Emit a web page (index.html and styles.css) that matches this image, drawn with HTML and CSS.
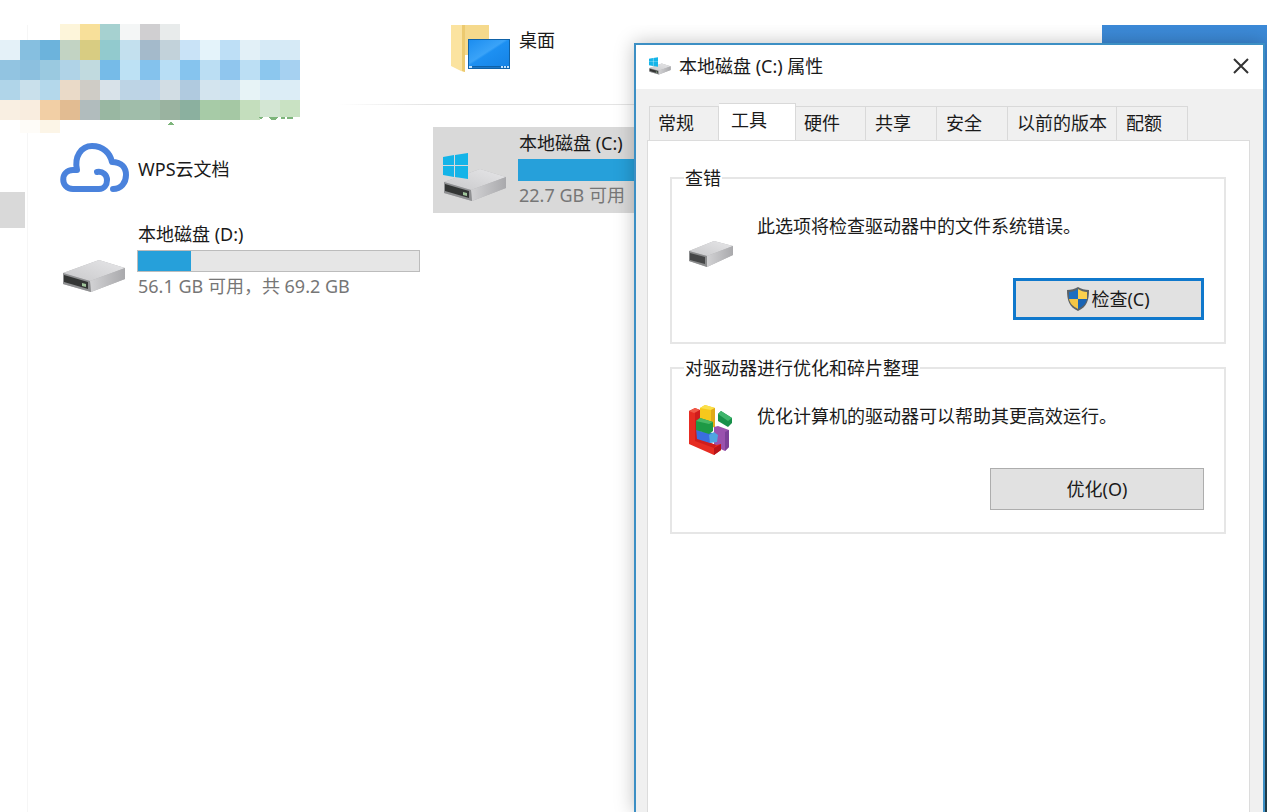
FILE: index.html
```
<!DOCTYPE html>
<html lang="zh-CN">
<head>
  <meta charset="UTF-8" />
  <meta name="viewport" content="width=device-width, initial-scale=1.0"/>
  <title>本地磁盘 (C:) 属性</title>
  <link rel="stylesheet" href="styles.css">
</head>
<body>
  <!-- shared icons -->
  <svg width="0" height="0" class="defs" aria-hidden="true">
    <defs>
      <linearGradient id="drive-top" x1="0" y1="1" x2="1" y2="0">
        <stop offset="0" stop-color="#c9c9cb"/>
        <stop offset="1" stop-color="#e6e6e8"/>
      </linearGradient>
      <linearGradient id="drive-side" x1="0" y1="0" x2="1" y2="0">
        <stop offset="0" stop-color="#d2d2d4"/>
        <stop offset="1" stop-color="#a9a9ac"/>
      </linearGradient>
      <linearGradient id="screen" x1="0" y1="0" x2="1" y2="1">
        <stop offset="0" stop-color="#1b8df0"/>
        <stop offset="0.45" stop-color="#3aa3f8"/>
        <stop offset="0.5" stop-color="#1d90f2"/>
        <stop offset="1" stop-color="#1583e6"/>
      </linearGradient>
      <symbol id="drive" viewBox="0 0 64 34">
        <path d="M1 14 37 1 63 9 63 20 29 33 1 25z" fill="#b5b5b7"/>
        <path d="M1 14 37 1 63 9 28 22z" fill="url(#drive-top)"/>
        <path d="M28 22 63 9 63 20 29 33z" fill="url(#drive-side)"/>
        <path d="M1 14 28 22 29 33 1 25z" fill="#8f9092"/>
        <path d="M2 16 26 23 26 30 2 23z" fill="#333534"/>
        <path d="M20 24l4 1v3l-4-1z" fill="#9fc49a"/>
      </symbol>
      <symbol id="windows" viewBox="0 0 25 26">
        <path d="M0 4 11 2V12H0zM12 2 25 0V12H12zM0 13H11V24L0 22zM12 13H25V26L12 24z" fill="#14b4e8"/>
      </symbol>
    </defs>
  </svg>

  <div class="desktop">
    <div class="explorer">
      <div class="sidebar"><div class="sidebar-item"></div></div>
      <div class="content">
        <div class="folders">
          <div class="tile tile-folder">
            <div class="tile-icon">
              <svg width="60" height="48" viewBox="0 0 60 48">
                <path d="M0 0H38V30H14z" fill="#f5d98c"/>
                <path d="M0 0H14V47L10 46 0 41z" fill="#fbe3a0"/>
                <path d="M14 0V47L11 46V0z" fill="#ecca70"/>
                <rect x="17" y="14" width="42" height="30" fill="#0f62a8"/>
                <rect x="18" y="15" width="40" height="26" fill="url(#screen)"/>
                <path d="M18 42H58V43H18z" fill="#1b77c8"/>
                <path d="M18 41h3v2h-3zM50 41h2v2h-2zM53 41h2v2h-2zM56 41h2v2h-2z" fill="#bfe2ff"/>
              </svg>
            </div>
            <div class="tile-body">
              <div class="tile-name">桌面</div>
            </div>
          </div>
        </div>

        <div class="drives">
          <div class="tile tile-center">
            <div class="tile-icon">
              <svg width="70" height="52" viewBox="0 0 70 52" fill="none" stroke="#4a82dc" stroke-width="6" stroke-linecap="round" stroke-linejoin="round">
                <path d="M37 29C43 28 47 32 47 37 47 42 44 46 39 46H13C0 46 0 27 13 27H17C14 14 21 3 32 3 43 3 50 10 52 19 62 19 66 25 66 32 66 40 61 46 53 46"/>
              </svg>
            </div>
            <div class="tile-body">
              <div class="tile-name">WPS云文档</div>
            </div>
          </div>

          <div class="tile tile-selected">
            <div class="tile-icon">
              <svg width="65" height="50" viewBox="0 0 65 50">
                <use href="#drive" x="0" y="15" width="64" height="34"/>
                <use href="#windows" x="0" y="0" width="25" height="26"/>
              </svg>
            </div>
            <div class="tile-body">
              <div class="tile-name">本地磁盘 (C:)</div>
              <div class="bar"><div class="bar-fill" style="width: 80%"></div></div>
              <div class="tile-info">22.7 GB 可用</div>
            </div>
          </div>

          <div class="tile">
            <div class="tile-icon">
              <svg width="65" height="50" viewBox="0 0 65 50">
                <use href="#drive" x="0" y="15" width="64" height="34"/>
              </svg>
            </div>
            <div class="tile-body">
              <div class="tile-name">本地磁盘 (D:)</div>
              <div class="bar"><div class="bar-fill" style="width: 19%"></div></div>
              <div class="tile-info">56.1 GB 可用，共 69.2 GB</div>
            </div>
          </div>
        </div>
      </div>
    </div>

    <div class="dialog" role="dialog" aria-labelledby="dialog-title">
      <div class="titlebar">
        <svg width="23" height="18" viewBox="0 0 23 18">
          <use href="#drive" x="1" y="6" width="22" height="12"/>
          <use href="#windows" x="1" y="0" width="9" height="10"/>
        </svg>
        <span id="dialog-title">本地磁盘 (C:) 属性</span>
        <button type="button" class="close" aria-label="关闭">
          <svg width="16" height="16" viewBox="0 0 16 16" stroke="#333" stroke-width="2"><path d="M1 1 15 15M15 1 1 15"/></svg>
        </button>
      </div>

      <div class="dialog-body">
        <div class="tabs" role="tablist">
          <button type="button" class="tab" role="tab">常规</button>
          <button type="button" class="tab active" role="tab" aria-selected="true">工具</button>
          <button type="button" class="tab" role="tab">硬件</button>
          <button type="button" class="tab" role="tab">共享</button>
          <button type="button" class="tab" role="tab">安全</button>
          <button type="button" class="tab" role="tab">以前的版本</button>
          <button type="button" class="tab" role="tab">配额</button>
        </div>

        <div class="panel" role="tabpanel">
          <fieldset>
            <legend>查错</legend>
            <div class="group">
              <div class="group-icon">
                <svg width="46" height="54" viewBox="0 0 46 54">
                  <path d="M1 37 26 27 45 32 45 41 19 53 1 47z" fill="#b4b4b6"/>
                  <path d="M1 37 26 27 45 32 19 42z" fill="url(#drive-top)"/>
                  <path d="M19 42 45 32 45 41 19 53z" fill="url(#drive-side)"/>
                  <path d="M1 37 19 42 19 53 1 47z" fill="#8a8b8c"/>
                  <path d="M2 39 17 43 17 50 2 46z" fill="#454647"/>
                </svg>
              </div>
              <p>此选项将检查驱动器中的文件系统错误。</p>
            </div>
            <div class="actions">
              <button type="button" class="btn btn-default">
                <svg width="22" height="24" viewBox="0 0 22 24">
                  <path d="M11 0C8 2 4 3 0 3 0 13 2 20 11 24 20 20 22 13 22 3 18 3 14 2 11 0z" fill="#5c6266"/>
                  <path d="M11 2C8 4 5 5 2 5L2 12H11z" fill="#1d6fc0"/>
                  <path d="M11 2C14 4 17 5 20 5L20 12H11z" fill="#fbd04e"/>
                  <path d="M2 12H11V22C5 19 3 16 2 12z" fill="#f4c544"/>
                  <path d="M20 12H11V22C17 19 19 16 20 12z" fill="#1a64b4"/>
                </svg>检查(C)
              </button>
            </div>
          </fieldset>

          <fieldset>
            <legend>对驱动器进行优化和碎片整理</legend>
            <div class="group">
              <div class="group-icon">
                <svg width="46" height="54" viewBox="0 0 46 54">
                  <path d="M12 4 17 1 27 4V22L12 18z" fill="#f6c81c"/>
                  <path d="M12 4 17 1 27 4 23 6z" fill="#fbe04a"/>
                  <path d="M23 6 27 4V24L23 22z" fill="#e0aa18"/>
                  <path d="M26 23 30 22 41 26V43L37 47 26 42z" fill="#9a52ae"/>
                  <path d="M37 28 41 26V43L37 47z" fill="#7c4098"/>
                  <path d="M1 7 7 4 12 6V35L28 41 33 40V46L26 51 1 40z" fill="#e62c22"/>
                  <path d="M1 7 7 4 12 6 6 9z" fill="#f05a48"/>
                  <path d="M7 9 12 6V35L28 41 26 44 7 37z" fill="#cf1d1c"/>
                  <path d="M26 44 33 40V46L26 51z" fill="#b8141a"/>
                  <path d="M8 24 12 27 25 29V37L22 39 9 35z" fill="#3a6ee0"/>
                  <path d="M21 31 26 28 30 31 29 38 22 39z" fill="#4fa5e2"/>
                  <path d="M8 17 12 14 25 18V27L21 30 8 26z" fill="#1d9a45"/>
                  <path d="M8 17 12 14 25 18 21 20z" fill="#48b866"/>
                  <path d="M30 10 33 7 44 14V19L40 23 30 17z" fill="#18904a"/>
                  <path d="M30 10 33 7 44 14 40 17z" fill="#3fb56c"/>
                </svg>
              </div>
              <p>优化计算机的驱动器可以帮助其更高效运行。</p>
            </div>
            <div class="actions">
              <button type="button" class="btn btn-wide">优化(O)</button>
            </div>
          </fieldset>
        </div>
      </div>
    </div>
  </div>

  <!-- pixelated cover over the logo -->
  <svg class="mosaic" width="300" height="112" viewBox="0 0 300 112" shape-rendering="crispEdges" aria-hidden="true">
    <g>
      <rect x="60" y="0" width="20" height="16" fill="#fdf5da"/>
      <rect x="80" y="0" width="20" height="16" fill="#f8e09a"/>
      <rect x="100" y="0" width="20" height="16" fill="#a6d1d0"/>
      <rect x="120" y="0" width="20" height="16" fill="#f4f6f6"/>
      <rect x="140" y="0" width="20" height="16" fill="#d0cfd1"/>
      <rect x="160" y="0" width="20" height="16" fill="#e8ebeb"/>
    </g>
    <g>
      <rect x="0" y="16" width="20" height="20" fill="#e4f1f8"/>
      <rect x="20" y="16" width="20" height="20" fill="#86bfe0"/>
      <rect x="40" y="16" width="20" height="20" fill="#6cb3dc"/>
      <rect x="60" y="16" width="20" height="20" fill="#c2d3c3"/>
      <rect x="80" y="16" width="20" height="20" fill="#d8cc82"/>
      <rect x="100" y="16" width="20" height="20" fill="#92cace"/>
      <rect x="120" y="16" width="20" height="20" fill="#c3e0ee"/>
      <rect x="140" y="16" width="20" height="20" fill="#a4bacb"/>
      <rect x="160" y="16" width="20" height="20" fill="#c2d2da"/>
      <rect x="180" y="16" width="20" height="20" fill="#c9e3f7"/>
      <rect x="200" y="16" width="20" height="20" fill="#e4f3fa"/>
      <rect x="220" y="16" width="20" height="20" fill="#bedff6"/>
      <rect x="240" y="16" width="20" height="20" fill="#e2f0f7"/>
      <rect x="260" y="16" width="40" height="20" fill="#d6eaf6"/>
    </g>
    <g>
      <rect x="0" y="36" width="20" height="20" fill="#92c4e1"/>
      <rect x="20" y="36" width="20" height="20" fill="#8cc0df"/>
      <rect x="40" y="36" width="20" height="20" fill="#9ac9e0"/>
      <rect x="60" y="36" width="20" height="20" fill="#b0d3e7"/>
      <rect x="80" y="36" width="20" height="20" fill="#c1dadf"/>
      <rect x="100" y="36" width="20" height="20" fill="#76bbe8"/>
      <rect x="120" y="36" width="20" height="20" fill="#bde1f4"/>
      <rect x="140" y="36" width="20" height="20" fill="#84c2ed"/>
      <rect x="160" y="36" width="20" height="20" fill="#b8def5"/>
      <rect x="180" y="36" width="20" height="20" fill="#86c4ee"/>
      <rect x="200" y="36" width="20" height="20" fill="#bbdef3"/>
      <rect x="220" y="36" width="20" height="20" fill="#90c6ee"/>
      <rect x="240" y="36" width="20" height="20" fill="#bcdff4"/>
      <rect x="260" y="36" width="20" height="20" fill="#8cc7ee"/>
      <rect x="280" y="36" width="20" height="20" fill="#a6d1f1"/>
    </g>
    <g>
      <rect x="0" y="56" width="20" height="20" fill="#b0d5e9"/>
      <rect x="20" y="56" width="20" height="20" fill="#c9e0eb"/>
      <rect x="40" y="56" width="20" height="20" fill="#b4d8eb"/>
      <rect x="60" y="56" width="20" height="20" fill="#eadac8"/>
      <rect x="80" y="56" width="20" height="20" fill="#cfccc6"/>
      <rect x="100" y="56" width="20" height="20" fill="#d8e2e9"/>
      <rect x="120" y="56" width="20" height="20" fill="#bdd4e5"/>
      <rect x="140" y="56" width="20" height="20" fill="#bdd3e6"/>
      <rect x="160" y="56" width="20" height="20" fill="#d2dde4"/>
      <rect x="180" y="56" width="20" height="20" fill="#b0cadf"/>
      <rect x="200" y="56" width="20" height="20" fill="#d3e4ee"/>
      <rect x="220" y="56" width="20" height="20" fill="#cfe3f0"/>
      <rect x="240" y="56" width="20" height="20" fill="#e7f3f6"/>
      <rect x="260" y="56" width="40" height="20" fill="#dcedf6"/>
    </g>
    <g>
      <rect x="0" y="76" width="20" height="20" fill="#f9efe2"/>
      <rect x="20" y="76" width="20" height="20" fill="#f9eddf"/>
      <rect x="40" y="76" width="20" height="20" fill="#f2cfa5"/>
      <rect x="60" y="76" width="20" height="20" fill="#e2bc92"/>
      <rect x="80" y="76" width="20" height="20" fill="#b1bcbd"/>
      <rect x="100" y="76" width="20" height="20" fill="#99b7a2"/>
      <rect x="120" y="76" width="40" height="20" fill="#a0bdaa"/>
      <rect x="160" y="76" width="20" height="20" fill="#9ab3a0"/>
      <rect x="180" y="76" width="20" height="20" fill="#8bb09f"/>
      <rect x="200" y="76" width="20" height="20" fill="#a7cba7"/>
      <rect x="220" y="76" width="20" height="20" fill="#a5c8a4"/>
      <rect x="240" y="76" width="20" height="20" fill="#c4debd"/>
      <rect x="260" y="76" width="20" height="17" fill="#d3e6d3"/>
      <rect x="280" y="76" width="20" height="17" fill="#c9e2c3"/>
    </g>
    <rect x="20" y="96" width="20" height="13" fill="#fefcf8"/>
    <rect x="40" y="96" width="20" height="13" fill="#fcf5e7"/>
    <path d="M167 101l3-3 3 1 1 2zM258 93h5l-2 2zM268 93h10l-3 3h-4zM281 93h4v2h-4zM287 93h6v2h-6z" fill="#7db57b"/>
  </svg>
</body>
</html>
```

FILE: styles.css
```
* {
  box-sizing: border-box;
}
body {
  margin: 0;
  padding-top: 25px;
  height: 100vh;
  background: #fff;
  color: #1a1a1a;
  font-family: "Noto Sans", "Noto Sans CJK SC", sans-serif;
  font-size: 18px;
  line-height: 20px;
  overflow: hidden;
}
button {
  font: inherit;
  color: inherit;
  cursor: pointer;
}
.defs {
  position: absolute;
}
.desktop {
  position: relative;
  height: 100%;
  overflow: hidden;
  background: linear-gradient(#3c8ad8, #3f86c8 30%, #185a8c 60%, #1c5078 75%, #24404c);
}

/* explorer window */
.explorer {
  display: flex;
  height: 100%;
  margin-right: 165px;
  background: #fff;
}
.sidebar {
  width: 28px;
  padding-top: 167px;
  border-right: 1px solid #f6f6f6;
}
.sidebar-item {
  width: 25px;
  height: 36px;
  background: #d9d9d9;
}
.content {
  flex: 1;
}
.folders,
.drives {
  display: grid;
  grid-template-columns: 376px 376px;
  gap: 5px;
  padding-left: 24px;
}
.folders {
  height: 80px;
  background: linear-gradient(90deg, transparent 310px, #e4e4e4 400px) bottom / 100% 1px no-repeat;
}
.drives {
  padding-top: 22px;
}
.tile {
  display: flex;
  height: 86px;
  padding: 6px 8px 0 0;
}
.tile-folder {
  grid-column: 2;
  padding-top: 0;
}
.tile-folder .tile-name {
  padding-top: 5px;
}
.tile-folder .tile-icon {
  padding: 0 0 0 18px;
}
.tile-center {
  align-items: center;
  padding: 0 8px 2px 0;
}
.tile-center .tile-icon {
  padding: 0 0 0 8px;
}
.tile-selected {
  background: #d9d9d9;
}
.tile-icon {
  width: 85px;
  padding: 20px 0 0 10px;
}
.tile-icon svg {
  display: block;
}
.tile-body {
  flex: 1;
}
.tile-name {
  padding-left: 1px;
}
.bar {
  height: 22px;
  margin: 6px 0 4px;
  background: #e6e6e6;
  border: 1px solid #bcbcbc;
}
.tile-selected .bar {
  border-color: #26a0da;
}
.bar-fill {
  height: 100%;
  background: #26a0da;
}
.tile-info {
  padding-left: 1px;
  color: #767676;
}

/* properties dialog */
.dialog {
  position: absolute;
  top: 18px;
  left: 634px;
  right: 2px;
  bottom: 0;
  display: flex;
  flex-direction: column;
  background: #f0f0f0;
  border: 2px solid #3c8fc4;
  border-bottom: none;
  box-shadow: 0 0 18px rgba(0, 0, 0, 0.25);
}
.titlebar {
  display: flex;
  align-items: center;
  gap: 8px;
  height: 44px;
  padding: 0 14px 2px 12px;
  background: #fff;
}
.close {
  display: flex;
  margin-left: auto;
  padding: 0;
  background: none;
  border: none;
}
.dialog-body {
  flex: 1;
  display: flex;
  flex-direction: column;
  padding: 14px 13px 0 11px;
}
.tabs {
  display: flex;
  align-items: flex-end;
  padding-left: 2px;
}
.tab {
  min-width: 70px;
  height: 34px;
  padding: 0 8px 2px;
  text-align: left;
  background: #f0f0f0;
  border: 1px solid #d9d9d9;
  border-left: none;
  border-bottom: none;
}
.tab:nth-child(n + 4) {
  min-width: 71px;
  padding: 0 9px 2px;
}
.tab:first-child {
  border-left: 1px solid #d9d9d9;
}
.tab.active {
  min-width: 77px;
  height: 38px;
  margin-bottom: -1px;
  padding: 0 12px 5px;
  background: #fff;
}
.panel {
  flex: 1;
  padding: 27px 23px 0 22px;
  background: #fff;
  border: 1px solid #dcdcdc;
  border-bottom: none;
}
fieldset {
  height: 176px;
  margin: 0 0 14px;
  padding: 0 20px 0 12px;
  border: 2px solid #e6e6e6;
}
legend {
  padding: 0 1px;
}
.group {
  display: flex;
  height: 90px;
  padding-left: 4px;
}
.group-icon {
  width: 69px;
  padding-top: 26px;
}
.group-icon svg {
  display: block;
}
.group p {
  margin: 28px 0 0;
}
.actions {
  display: flex;
  justify-content: flex-end;
}
.btn {
  display: flex;
  align-items: center;
  justify-content: center;
  gap: 2px;
  width: 191px;
  height: 42px;
  background: #e1e1e1;
  border: 1px solid #adadad;
}
.btn-default {
  border: 3px solid #0f78cc;
}
.btn-wide {
  width: 214px;
}

/* logo cover */
.mosaic {
  position: absolute;
  top: 24px;
  left: 0;
}
```
